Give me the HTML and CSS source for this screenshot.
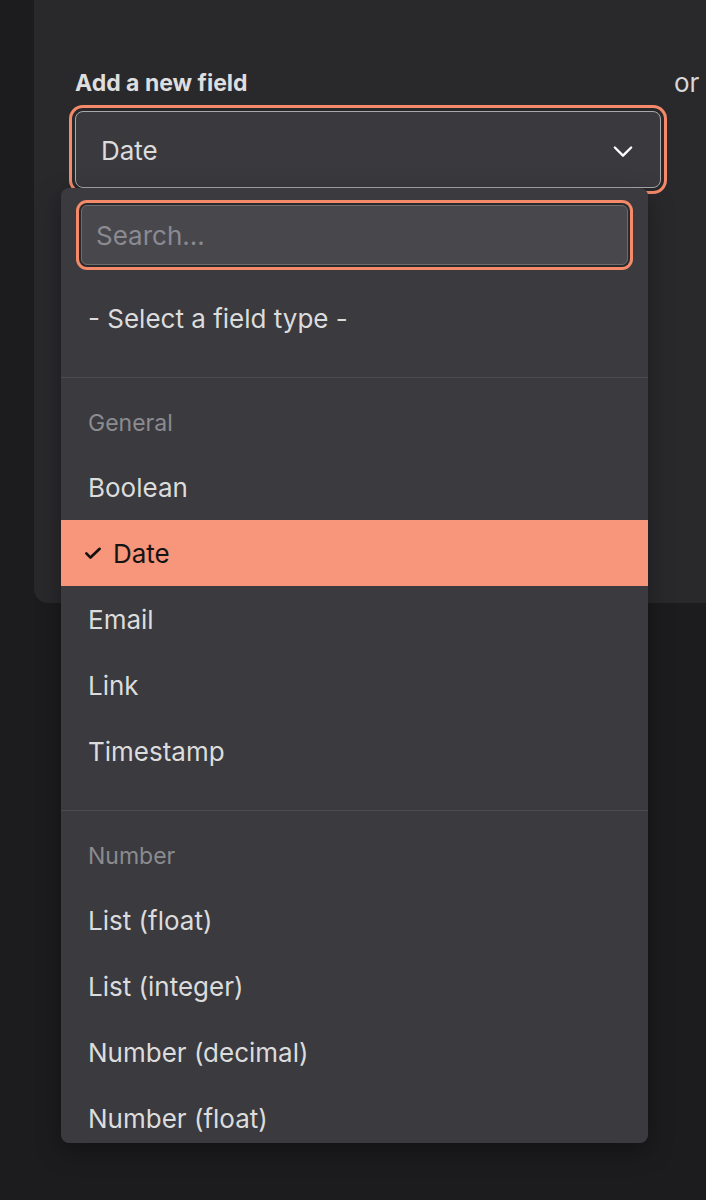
FILE: index.html
```html
<!DOCTYPE html>
<html lang="en">
<head>
    <meta charset="UTF-8">
    <meta name="viewport" content="width=device-width, initial-scale=1.0">
    <title>Add a new field</title>
    <link rel="stylesheet" href="styles.css">
</head>
<body>

    <div class="page">
        <div class="card">
            <div class="field-row">
                <div class="field">
                    <label class="field-label">Add a new field</label>
                    <div class="select">
                        <span>Date</span>
                        <svg class="chevron" width="28" height="28" viewBox="0 0 24 24" fill="none" stroke="#ffffff" stroke-width="2" stroke-linecap="round" stroke-linejoin="round">
                            <path d="M5 9l7 7 7-7"/>
                        </svg>
                    </div>

                    <!-- open dropdown, sits over the card -->
                    <div class="dropdown">
                        <div class="search-wrap">
                            <input class="search" type="text" placeholder="Search...">
                        </div>

                        <div class="group">
                            <div class="option">- Select a field type -</div>
                        </div>

                        <div class="group">
                            <div class="group-title">General</div>
                            <div class="option">Boolean</div>
                            <div class="option selected">
                                <svg class="check" width="20" height="20" viewBox="0 0 24 24" fill="none" stroke="#111111" stroke-width="3.2" stroke-linecap="round" stroke-linejoin="round">
                                    <path d="M4 12.5l5 5L20 7"/>
                                </svg>
                                Date
                            </div>
                            <div class="option">Email</div>
                            <div class="option">Link</div>
                            <div class="option">Timestamp</div>
                        </div>

                        <div class="group">
                            <div class="group-title">Number</div>
                            <div class="option">List (float)</div>
                            <div class="option">List (integer)</div>
                            <div class="option">Number (decimal)</div>
                            <div class="option">Number (float)</div>
                        </div>
                    </div>
                </div>
                <div class="or">or</div>
            </div>
        </div>
    </div>

</body>
</html>
```

FILE: styles.css
```css
html, body {
    min-height: 1200px;
}

body {
    margin: 0;
    background-color: #1c1c1e;
    font-family: Inter, "Noto Sans", sans-serif;
    color: #dcdcdc;
}

.page {
    padding-left: 34px;
}

.card {
    height: 603px;
    background-color: #29292c;
    border-bottom-left-radius: 14px;
    padding: 70px 0 0 41px;
    box-sizing: border-box;
}

.field-row {
    display: flex;
    gap: 13px;
}

.field {
    position: relative;
    width: 586px;
}

.field-label {
    display: block;
    font-size: 23px;
    font-weight: 700;
    line-height: 26px;
    letter-spacing: 0;
    color: #dedede;
    margin-bottom: 15px;
}

.or {
    font-size: 26px;
    line-height: 26px;
    color: #d8d8d8;
}

.select {
    display: flex;
    align-items: center;
    justify-content: space-between;
    height: 77px;
    box-sizing: border-box;
    padding: 2px 23px 0 25px;
    background-color: #3a393e;
    border: 1px solid #a9a9ad;
    border-radius: 8px;
    box-shadow: 0 0 0 3px #29292c, 0 0 0 6px #f58a6b;
    font-size: 26px;
    color: #dcdcdc;
}

.dropdown {
    position: absolute;
    left: -14px;
    top: 118px;
    width: 587px;
    height: 955px;
    overflow: hidden;
    background-color: #3a3a3f;
    border-radius: 8px;
    box-shadow: 0 8px 24px rgba(0, 0, 0, 0.35);
}

.search-wrap {
    padding: 17px 20px 20px 20px;
}

.search {
    display: block;
    width: 100%;
    height: 60px;
    box-sizing: border-box;
    padding: 0 14px;
    background-color: #48474c;
    border: 1px solid #6b6b70;
    border-radius: 6px;
    box-shadow: 0 0 0 2px #2a2a2d, 0 0 0 5px #f58a6b;
    font-family: inherit;
    font-size: 26px;
    color: #dcdcdc;
    outline: none;
}

.search::placeholder {
    color: #8a8a92;
}

.group {
    padding: 0 0 26px 0;
    border-bottom: 1px solid #4b4b51;
}

.group + .group {
    padding-top: 14px;
}

.group:last-child {
    border-bottom: none;
}

.group-title {
    height: 62px;
    line-height: 62px;
    padding-left: 27px;
    font-size: 23px;
    color: #8b8b90;
}

.option {
    display: flex;
    align-items: center;
    height: 66px;
    padding-left: 27px;
    font-size: 26px;
    color: #dcdcdc;
}

.option.selected {
    padding-left: 22px;
    background-color: #f7967a;
    color: #141414;
}

.check {
    margin-right: 10px;
}
```
